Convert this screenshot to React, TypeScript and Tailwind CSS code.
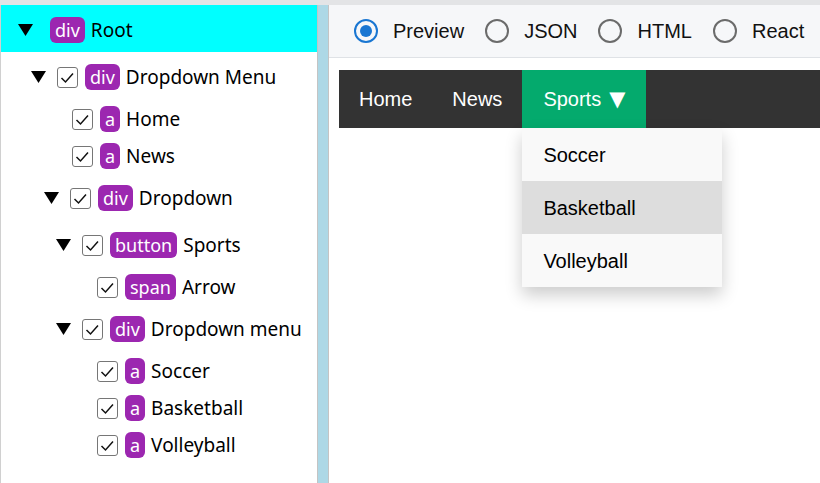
import React from 'react';

type Row = {
  tag: string;
  label: string;
  caret?: boolean;
  check?: boolean;
  pad: string;
  mt: string;
  active?: boolean;
};

const rows: Row[] = [
  { tag: 'div', label: 'Root', caret: true, check: false, pad: 'pl-[17px]', mt: 'mt-0', active: true },
  { tag: 'div', label: 'Dropdown Menu', caret: true, check: true, pad: 'pl-[30px]', mt: 'mt-[10px]' },
  { tag: 'a', label: 'Home', check: true, pad: 'pl-[71px]', mt: 'mt-[12px]' },
  { tag: 'a', label: 'News', check: true, pad: 'pl-[71px]', mt: 'mt-[7px]' },
  { tag: 'div', label: 'Dropdown', caret: true, check: true, pad: 'pl-[43px]', mt: 'mt-[12px]' },
  { tag: 'button', label: 'Sports', caret: true, check: true, pad: 'pl-[55px]', mt: 'mt-[17px]' },
  { tag: 'span', label: 'Arrow', check: true, pad: 'pl-[96px]', mt: 'mt-[12px]' },
  { tag: 'div', label: 'Dropdown menu', caret: true, check: true, pad: 'pl-[55px]', mt: 'mt-[12px]' },
  { tag: 'a', label: 'Soccer', check: true, pad: 'pl-[96px]', mt: 'mt-[12px]' },
  { tag: 'a', label: 'Basketball', check: true, pad: 'pl-[96px]', mt: 'mt-[7px]' },
  { tag: 'a', label: 'Volleyball', check: true, pad: 'pl-[96px]', mt: 'mt-[7px]' },
];

const Caret = () => (
  <svg width="15" height="12" viewBox="0 0 15 12" className="shrink-0">
    <path d="M0 0 H15 L7.5 12 Z" fill="#000" />
  </svg>
);

const CheckBox = () => (
  <span className="w-[21px] h-[21px] shrink-0 border border-[#767676] rounded-[3px] bg-white flex items-center justify-center">
    <svg width="19" height="19" viewBox="0 0 19 19">
      <path d="M3.5 10 L7.5 14 L15 5.5" fill="none" stroke="#111" strokeWidth="1.5" />
    </svg>
  </span>
);

const TreeRow: React.FC<{ row: Row }> = ({ row }) => (
  <div
    className={`flex items-center ${row.pad} ${row.mt} ${
      row.active ? 'h-[47px] pt-[3px] bg-[#00ffff]' : 'h-[30px]'
    }`}
  >
    {row.caret && <Caret />}
    {row.check && (
      <span className={row.caret ? 'ml-[11px]' : ''}>
        <CheckBox />
      </span>
    )}
    <span
      className={`${row.check ? 'ml-[7px]' : 'ml-[17px]'} h-[26px] px-[5px] rounded-[6px] bg-[#9c27b0] text-white text-[18px] flex items-center leading-none`}
    >
      {row.tag}
    </span>
    <span className="ml-[6px] text-black text-[19px]">{row.label}</span>
  </div>
);

const Radio: React.FC<{ label: string; checked?: boolean }> = ({ label, checked }) => (
  <label className="flex items-center">
    <span
      className={`w-[24px] h-[24px] rounded-full border-2 flex items-center justify-center ${
        checked ? 'border-[#1976d2]' : 'border-[#6b6b6b]'
      }`}
    >
      {checked && <span className="w-[12px] h-[12px] rounded-full bg-[#1976d2]" />}
    </span>
    <span className="ml-[15px]">{label}</span>
  </label>
);

export default function App() {
  return (
    <div className="h-[483px] w-[820px] overflow-hidden border-t-[5px] border-[#e3e4e6] flex bg-white">
      <div
        className="w-[317px] shrink-0 border-l border-[#d0d0d0]"
        style={{ fontFamily: '"Noto Sans", "Open Sans", sans-serif' }}
      >
        {rows.map((r) => (
          <TreeRow key={r.label} row={r} />
        ))}
      </div>
      <div className="w-[12px] shrink-0 bg-[#add8e6] border-x border-[#c4c4c4]" />
      <div
        className="flex-1 flex flex-col min-w-0"
        style={{ fontFamily: '"Liberation Sans", Arial, sans-serif' }}
      >
        <div className="h-[53px] shrink-0 bg-[#f6f7f9] border-b border-[#dfe2e6] flex items-center pl-[25px] gap-[21px] text-[20px] text-[#111]">
          <Radio label="Preview" checked />
          <Radio label="JSON" />
          <Radio label="HTML" />
          <Radio label="React" />
        </div>
        <div className="pt-[12px] pl-[10px]">
          <nav className="h-[58px] bg-[#333] flex text-white text-[20px] w-[500px]">
            <a className="px-[20px] flex items-center">Home</a>
            <a className="px-[20px] flex items-center">News</a>
            <div className="relative">
              <button className="h-full px-[21px] bg-[#04aa6d] flex items-center gap-[8px]">
                Sports
                <span style={{ fontFamily: '"DejaVu Sans", sans-serif' }} className="text-[21px] leading-none">▼</span>
              </button>
              <div className="absolute left-0 top-full w-[200px] bg-[#f9f9f9] text-black shadow-[0_8px_16px_0_rgba(0,0,0,0.2)] z-10">
                <a className="h-[53px] px-[21px] flex items-center">Soccer</a>
                <a className="h-[53px] px-[21px] flex items-center bg-[#ddd]">Basketball</a>
                <a className="h-[53px] px-[21px] flex items-center">Volleyball</a>
              </div>
            </div>
          </nav>
        </div>
      </div>
    </div>
  );
}
